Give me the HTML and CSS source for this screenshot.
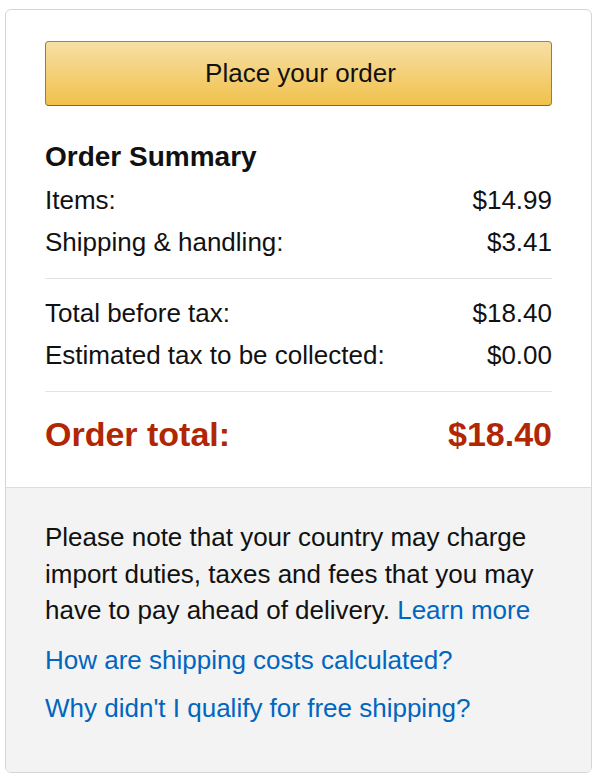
FILE: index.html
```html
<!DOCTYPE html>
<html lang="en">
  <head>
    <meta charset="UTF-8" />
    <title>Order Summary</title>
    <link rel="stylesheet" href="styles.css">
  </head>
  <body>

    <!-- Checkout box -->
    <div class="box">
      <div class="top">
        <button class="place-order">Place your order</button>

        <h3>Order Summary</h3>
        <div class="row"><span>Items:</span><span>$14.99</span></div>
        <div class="row"><span>Shipping &amp; handling:</span><span>$3.41</span></div>
        <div class="divider"></div>
        <div class="row"><span>Total before tax:</span><span>$18.40</span></div>
        <div class="row"><span>Estimated tax to be collected:</span><span>$0.00</span></div>
        <div class="divider"></div>
        <div class="row total"><span>Order total:</span><span>$18.40</span></div>
      </div>

      <div class="bottom">
        <p class="note">
          Please note that your country may charge import duties, taxes and fees that you may
          have to pay ahead of delivery. <a href="#">Learn more</a>
        </p>
        <a class="link" href="#">How are shipping costs calculated?</a>
        <a class="link" href="#">Why didn't I qualify for free shipping?</a>
      </div>
    </div>

  </body>
</html>
```

FILE: styles.css
```css
* {
  box-sizing: border-box;
}

body {
  margin: 9px 8px 0 5px;
  font-family: "Liberation Sans", Arial, sans-serif;
  font-size: 26px;
  color: #111;
  background: #fff;
}

.box {
  border: 1px solid #d5d5d5;
  border-radius: 6px;
  overflow: hidden;
}

.top {
  padding: 31px 39px 31px 39px;
}

.place-order {
  display: block;
  width: 100%;
  height: 65px;
  padding: 0 0 0 4px;
  font-family: inherit;
  font-size: 26px;
  line-height: 63px;
  color: #111;
  border: 1px solid;
  border-color: #a88734 #9c7e31 #846a29;
  border-radius: 4px;
  background: linear-gradient(to bottom, #f7dfa5, #f0c14b);
  cursor: pointer;
}

h3 {
  margin: 33px 0 4px;
  font-size: 28px;
  line-height: 36px;
  font-weight: bold;
}

.row {
  display: flex;
  justify-content: space-between;
  line-height: 42px;
}

.divider {
  height: 1px;
  background: #e3e3e3;
  margin: 15px 0 13px;
}

.total {
  margin-top: 20px;
  font-size: 34px;
  font-weight: bold;
  line-height: 44px;
  color: #b12704;
}

.bottom {
  background: #f3f3f3;
  border-top: 1px solid #dddddd;
  padding: 31px 39px 40px;
}

.note {
  margin: 0;
  line-height: 36.5px;
}

a {
  color: #0066c0;
  text-decoration: none;
}

.link {
  display: block;
  line-height: 48px;
}

.note + .link {
  margin-top: 7px;
}
```
